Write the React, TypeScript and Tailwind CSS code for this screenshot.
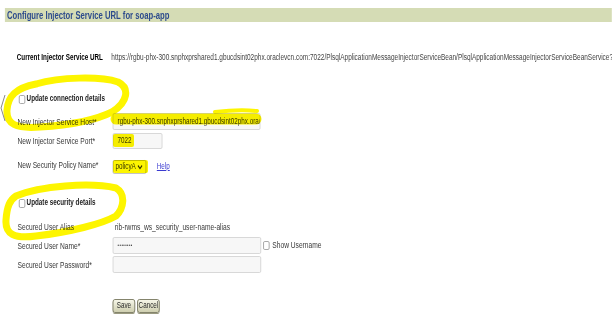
import React from 'react';

// The reference is a horizontally squeezed screenshot: the form is laid out at
// natural width and squeezed with scale-x; the highlighter marks sit on top.

const Label: React.FC<{ children: React.ReactNode }> = ({ children }) => (
  <div className="w-[136px] shrink-0 text-[9.5px] leading-[14px] text-[#383838] whitespace-nowrap">{children}</div>
);

const Box: React.FC = () => (
  <span className="inline-block w-[9px] h-[9px] shrink-0 border border-[#9a9a9a] rounded-[2px] bg-white" />
);

const TextBox: React.FC<{ w: string; value?: string; small?: boolean }> = ({ w, value, small }) => (
  <div
    className={`${w} h-full shrink-0 flex items-center overflow-hidden border border-[#d2d2d2] rounded-[2px] bg-[#f7f7f7] pl-[6px] whitespace-nowrap text-[#3a3a3a] ${
      small ? 'text-[6px] tracking-[0.6px]' : 'text-[9px]'
    }`}
  >
    {value}
  </div>
);

const Btn: React.FC<{ children: React.ReactNode; w: string }> = ({ children, w }) => (
  <div
    className={`${w} h-[14px] flex items-center justify-center rounded-[3px] border border-[#6e6e52] bg-gradient-to-b from-[#f6f6e8] to-[#cfcfb0] text-[9px] text-[#2a2a2a] shadow-[0_1px_0_#9a9a80]`}
  >
    {children}
  </div>
);

export default function App() {
  return (
    <div className="relative w-[612px] h-[318px] overflow-hidden bg-white">
      <div className="w-[874px] origin-top-left scale-x-[0.7] pt-[8px] font-['Liberation_Sans',Arial,sans-serif]">
        {/* title bar */}
        <div className="ml-[7px] h-[14px] bg-[#d5dcb5] pl-[3px] flex items-center">
          <span className="text-[11px] font-bold text-[#2e4c8c] leading-none">Configure Injector Service URL for soap-app</span>
        </div>

        <div className="pl-[24px]">
          {/* current url */}
          <div className="mt-[29px] h-[14px] flex items-center">
            <div className="w-[135px] shrink-0 text-[9px] font-bold text-black whitespace-nowrap">Current Injector Service URL</div>
            <div className="text-[9.25px] text-[#444] whitespace-nowrap">
              https://rgbu-phx-300.snphxprshared1.gbucdsint02phx.oraclevcn.com:7022/PlsqlApplicationMessageInjectorServiceBean/PlsqlApplicationMessageInjectorServiceBeanService?
            </div>
          </div>

          {/* connection */}
          <div className="mt-[27px] h-[14px] flex items-center gap-[2px] pl-[3px]">
            <Box />
            <span className="text-[9px] font-bold text-[#222]">Update connection details</span>
          </div>
          <div className="mt-[7px] h-[17px] flex items-center pl-[1px]">
            <Label>New Injector Service Host*</Label>
            <TextBox w="w-[211px]" value="rgbu-phx-300.snphxprshared1.gbucdsint02phx.oraclevcn.com" />
          </div>
          <div className="mt-[3px] h-[16px] flex items-center pl-[1px]">
            <Label>New Injector Service Port*</Label>
            <TextBox w="w-[71px]" value="7022" />
          </div>
          <div className="mt-[9px] h-[14px] flex items-center pl-[1px]">
            <Label>New Security Policy Name*</Label>
            <div className="w-[48px] h-[14px] mt-[3px] shrink-0 flex items-center justify-between border border-[#b8b8b8] rounded-[2px] bg-white px-[3px] text-[9px] text-[#333]">
              <span>policyA</span>
              <svg width="8" height="6" viewBox="0 0 8 6" className="mr-[1px]">
                <path d="M1 1.5 L4 4.5 L7 1.5" fill="none" stroke="#333" strokeWidth="1.4" />
              </svg>
            </div>
            <span className="ml-[15px] mt-[3px] text-[9px] text-[#3a3ad0] underline">Help</span>
          </div>

          {/* security */}
          <div className="mt-[24px] h-[14px] flex items-center gap-[2px] pl-[3px]">
            <Box />
            <span className="text-[9px] font-bold text-[#222]">Update security details</span>
          </div>
          <div className="mt-[10px] h-[14px] flex items-center pl-[1px]">
            <Label>Secured User Alias</Label>
            <span className="text-[9.5px] text-[#3a3a3a] pl-[3px]">rib-rwms_ws_security_user-name-alias</span>
          </div>
          <div className="mt-[3px] h-[17px] flex items-center pl-[1px]">
            <Label>Secured User Name*</Label>
            <TextBox w="w-[212px]" value="••••••••" small />
            <div className="ml-[3px] flex items-center gap-[4px]">
              <Box />
              <span className="text-[9.5px] text-[#3a3a3a]">Show Username</span>
            </div>
          </div>
          <div className="mt-[2px] h-[17px] flex items-center pl-[1px]">
            <Label>Secured User Password*</Label>
            <TextBox w="w-[212px]" />
          </div>

          {/* actions */}
          <div className="mt-[26px] flex gap-[3px] pl-[137px]">
            <Btn w="w-[32px]">Save</Btn>
            <Btn w="w-[32px]">Cancel</Btn>
          </div>
        </div>
      </div>

      {/* hand drawn highlighter marks */}
      <svg
        className="absolute inset-0 pointer-events-none mix-blend-multiply"
        width="612"
        height="318"
        viewBox="0 0 612 318"
      >
        <g fill="none" stroke="#fdf500" strokeLinecap="round" strokeLinejoin="round">
          <path
            strokeWidth="7"
            d="M36 84 C60 77 100 76 118 82 C130 88 128 102 112 112 C96 120 70 125 40 127 C16 129 6 124 7 110 C8 96 16 88 36 84"
          />
          <path
            strokeWidth="7"
            d="M16 196 C40 186 90 182 116 188 C126 194 124 208 116 216 C102 224 70 232 36 236 C14 239 5 234 6 220 C7 206 10 200 16 196"
          />
          <path strokeWidth="11" d="M116 119 L256 119" />
          <path strokeWidth="4" d="M215 112 C232 110 247 110 257 111" />
        </g>
        <g fill="#fdf500">
          <rect x="113" y="134" width="21" height="13" rx="2" />
          <rect x="113" y="160" width="35" height="13" rx="2" />
        </g>
        <path d="M5 95 L1 108 L5 121" fill="none" stroke="#888" strokeWidth="1" />
      </svg>
    </div>
  );
}
